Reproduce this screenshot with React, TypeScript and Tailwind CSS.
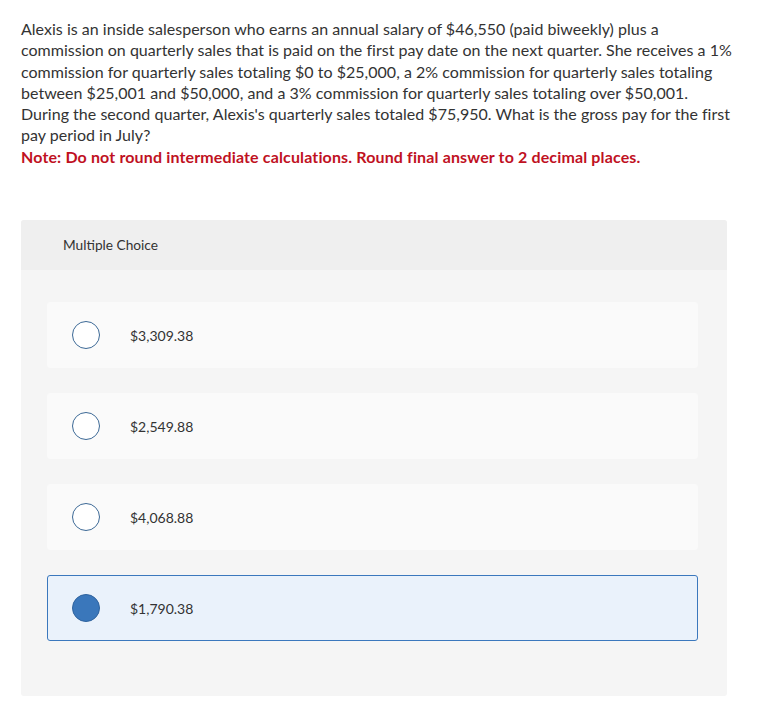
import React from "react";

const lines = [
  "Alexis is an inside salesperson who earns an annual salary of $46,550 (paid biweekly) plus a",
  "commission on quarterly sales that is paid on the first pay date on the next quarter. She receives a 1%",
  "commission for quarterly sales totaling $0 to $25,000, a 2% commission for quarterly sales totaling",
  "between $25,001 and $50,000, and a 3% commission for quarterly sales totaling over $50,001.",
  "During the second quarter, Alexis's quarterly sales totaled $75,950. What is the gross pay for the first",
  "pay period in July?",
];

const options = [
  { label: "$3,309.38", selected: false },
  { label: "$2,549.88", selected: false },
  { label: "$4,068.88", selected: false },
  { label: "$1,790.38", selected: true },
];

export default function App() {
  return (
    <div
      className="w-[776px] h-[707px] bg-white text-[#333333]"
      style={{ fontFamily: "Lato, 'Open Sans', sans-serif" }}
    >
      <div className="pl-[21px] pt-[18px]">
        <p className="text-[16px] leading-[21.3px] tracking-[0.02px] whitespace-nowrap">
          {lines.map((l, i) => (
            <React.Fragment key={i}>
              {l}
              {i < lines.length - 1 && <br />}
            </React.Fragment>
          ))}
        </p>
        <p className="text-[16px] leading-[21.3px] tracking-[0.14px] font-bold text-[#c0111f] whitespace-nowrap">
          Note: Do not round intermediate calculations. Round final answer to 2 decimal places.
        </p>
      </div>
      <div className="ml-[21px] mt-[53px] w-[706px] h-[476px] bg-[#f5f5f5] rounded-[3px] flex flex-col">
        <div className="h-[50px] bg-[#efefef] rounded-t-[3px] flex items-center pl-[42px] text-[13.7px] text-[#333]">
          Multiple Choice
        </div>
        <div className="flex flex-col gap-[25px] pt-[32px] pl-[26px] pr-[29px]">
          {options.map((o, i) => (
            <div
              key={i}
              className={
                o.selected
                  ? "h-[66px] rounded-[3px] bg-[#eaf2fb] border border-[#3b78bd] flex items-center pl-[24px]"
                  : "h-[66px] rounded-[3px] bg-[#fafafa] border border-[#fafafa] flex items-center pl-[24px]"
              }
            >
              {o.selected ? (
                <div className="w-[28px] h-[28px] shrink-0 rounded-full bg-[#3a77bb] border border-[#2f639e]" />
              ) : (
                <div className="w-[28px] h-[28px] shrink-0 rounded-full bg-white border-[1.5px] border-[#3c6996]" />
              )}
              <span className="text-[14px] text-[#333] ml-[30px]">{o.label}</span>
            </div>
          ))}
        </div>
      </div>
    </div>
  );
}
